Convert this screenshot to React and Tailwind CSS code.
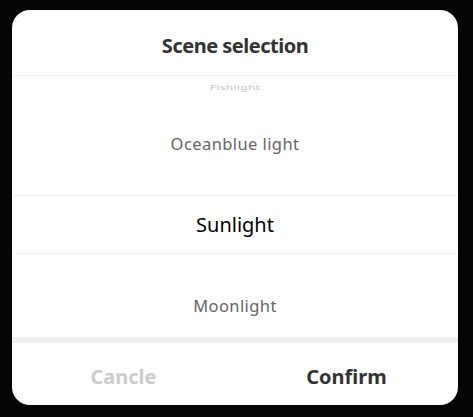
export default function App() {
  const font = { fontFamily: '"Noto Sans", "Open Sans", sans-serif' };

  return (
    <div className="w-[473px] h-[417px] bg-[#050505] pt-[10px] pl-[12px]" style={font}>
      <div className="w-[446px] h-[395px] bg-white rounded-[18px] overflow-hidden flex flex-col">

        {/* HEADER */}
        <div className="h-[66px] flex items-center justify-center pt-[6px] border-b border-[#f3f3f3]">
          <h1 className="text-[20px] font-bold text-[#333] tracking-tight">Scene selection</h1>
        </div>

        {/* PICKER */}
        <div className="h-[119px] flex flex-col items-center">
          <div className="h-[24px] flex items-center text-[12px] text-[#c4c4c4] scale-y-[0.6] tracking-wide">
            Fishlight
          </div>
          <div className="mt-[32px] text-[16.5px] text-[#666] tracking-wide">Oceanblue light</div>
        </div>

        <div className="h-[59px] flex items-center justify-center border-y border-[#f1f1f1]">
          <span className="text-[20px] text-black">Sunlight</span>
        </div>

        <div className="h-[83px] flex flex-col items-center">
          <div className="mt-[40px] text-[16.5px] text-[#666] tracking-wide">Moonlight</div>
        </div>

        <div className="h-[6px] bg-[#efefef]" />

        {/* FOOTER */}
        <div className="flex-1 flex pt-[6px]">
          <button className="flex-1 flex items-center justify-center text-[20px] font-bold text-[#cccccc]">
            Cancle
          </button>
          <button className="flex-1 flex items-center justify-center text-[20px] font-bold text-[#333]">
            Confirm
          </button>
        </div>
      </div>
    </div>
  );
}
